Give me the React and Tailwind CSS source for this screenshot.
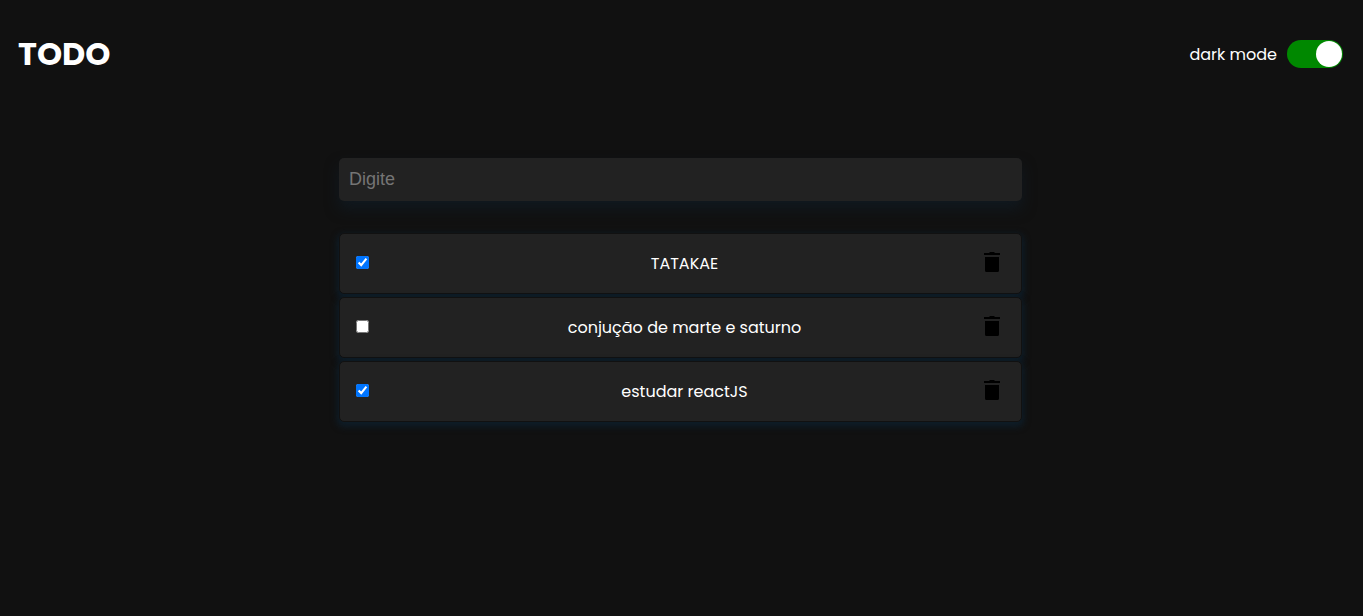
import { useState } from "react";

const initialTasks = [
  { id: 1, text: "TATAKAE", done: true },
  { id: 2, text: "conjução de marte e saturno", done: false },
  { id: 3, text: "estudar reactJS", done: true },
];

function TrashIcon() {
  return (
    <svg viewBox="0 0 16 20" className="h-5 w-4" fill="currentColor" aria-hidden="true">
      <path d="M0 3V1h5l1-1h4l1 1h5v2zM1 5h14v13.500q0 1.500-1.500 1.500H2.500q-1.500 0-1.500-1.500z" />
    </svg>
  );
}

function Header({ dark, onToggle }) {
  return (
    <header className="flex h-27 items-center justify-between">
      <h1 className="text-[32px] leading-12 font-bold">TODO</h1>
      <label className="flex cursor-pointer items-center gap-2.5 text-base leading-[25px]">
        dark mode
        <input
          type="checkbox"
          role="switch"
          checked={dark}
          onChange={onToggle}
          className="peer sr-only"
        />
        <span className="flex h-7 w-14 justify-start rounded-full bg-neutral-500 p-px peer-checked:justify-end peer-checked:bg-[#008800]">
          <span className="size-[26px] rounded-full bg-white" />
        </span>
      </label>
    </header>
  );
}

function Task({ task, onToggle, onDelete }) {
  return (
    <li className="flex h-[61px] items-center rounded-[5px] border border-[#111111] bg-[#222222] pr-[17px] pl-4 shadow-[0_3px_6px_2px_rgba(14,30,41,0.95)]">
      <input
        id={`task-${task.id}`}
        type="checkbox"
        checked={task.done}
        onChange={onToggle}
        className="mb-0.5 size-[13px]"
      />
      <label htmlFor={`task-${task.id}`} className="ml-5 flex-1 text-center text-base">
        {task.text}
      </label>
      <button
        type="button"
        aria-label={`Remover ${task.text}`}
        onClick={onDelete}
        className="mb-1 cursor-pointer px-1 text-black"
      >
        <TrashIcon />
      </button>
    </li>
  );
}

export default function App() {
  const [dark, setDark] = useState(true);
  const [draft, setDraft] = useState("");
  const [tasks, setTasks] = useState(initialTasks);

  const addTask = (event) => {
    event.preventDefault();
    if (!draft.trim()) return;
    setTasks([...tasks, { id: Date.now(), text: draft.trim(), done: false }]);
    setDraft("");
  };

  return (
    <div className="min-h-screen bg-[#111111] pr-5 pl-[18px] font-['Poppins','Inter',sans-serif] text-white">
      <Header dark={dark} onToggle={() => setDark(!dark)} />
      <main className="mx-auto mt-[50px] w-full max-w-[683px]">
        <form onSubmit={addTask}>
          <input
            type="text"
            aria-label="Nova tarefa"
            placeholder="Digite"
            value={draft}
            onChange={(event) => setDraft(event.target.value)}
            className="block h-[43px] w-full rounded-[5px] bg-[#222222] px-2.5 font-['Liberation_Sans',sans-serif] text-[18px] outline-none placeholder:text-[#757575] shadow-[0_8px_14px_rgba(17,26,33,0.9)]"
          />
        </form>
        <ul className="mt-8 flex flex-col gap-[3px]">
          {tasks.map((task) => (
            <Task
              key={task.id}
              task={task}
              onToggle={() =>
                setTasks(tasks.map((t) => (t.id === task.id ? { ...t, done: !t.done } : t)))
              }
              onDelete={() => setTasks(tasks.filter((t) => t.id !== task.id))}
            />
          ))}
        </ul>
      </main>
    </div>
  );
}
